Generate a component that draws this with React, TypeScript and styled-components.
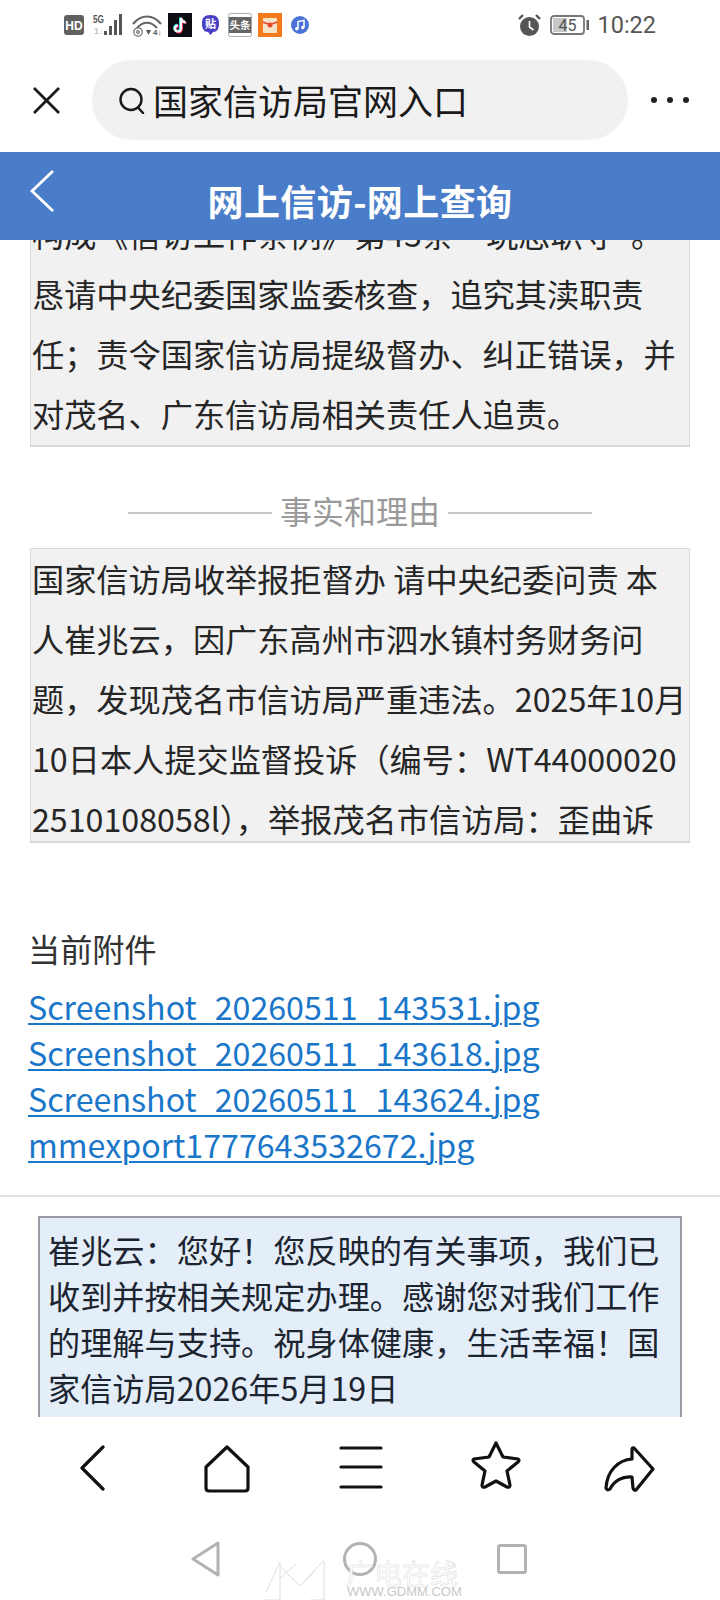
import React from "react";
import styled, { createGlobalStyle } from "styled-components";

const Global = createGlobalStyle`
  html, body { margin: 0; padding: 0; background: #fff; }
  * { box-sizing: border-box; }
  body { font-family: "Noto Sans CJK SC", "Noto Sans", sans-serif; color: #222; }
`;

const Page = styled.div`
  width: 720px;
  height: 1600px;
  display: flex;
  flex-direction: column;
  overflow: hidden;
  background: #fff;
`;

const StatusBar = styled.div`
  height: 48px;
  flex: none;
  display: flex;
  align-items: center;
  justify-content: space-between;
  padding: 1px 64px 0 0;
`;
const StatusGroup = styled.div`
  display: flex;
  align-items: center;
`;
const Slot = styled.span<{ $left: number }>`
  display: flex;
  margin-left: ${(p) => p.$left}px;
`;
const Clock = styled.span`
  margin-left: 8px;
  font: 400 23.5px/28px Roboto, sans-serif;
  color: #555;
`;

const BrowserBar = styled.div`
  height: 104px;
  flex: none;
  display: flex;
  align-items: flex-start;
  padding: 12px 31px 0 33px;
`;
const CloseIcon = styled.svg`
  width: 27px;
  height: 27px;
  margin-top: 27px;
  flex: none;
`;
const SearchPill = styled.div`
  margin-left: 32px;
  width: 537px;
  height: 80px;
  border-radius: 40px;
  background: #f1f1f1;
  display: flex;
  align-items: center;
  padding-left: 26px;
`;
const SearchText = styled.span`
  margin-left: 7px;
  font-size: 35px;
  line-height: 46px;
  color: #1a1a1a;
  white-space: nowrap;
`;
const Dots = styled.div`
  margin-left: 23px;
  margin-top: 37px;
  display: flex;
  gap: 10px;
`;
const Dot = styled.i`
  width: 6px;
  height: 6px;
  border-radius: 50%;
  background: #222;
`;

const SiteHeader = styled.header`
  position: relative;
  z-index: 2;
  height: 88px;
  flex: none;
  background: #4a7dc9;
  display: flex;
  align-items: center;
  justify-content: center;
`;
const HeaderBack = styled.svg`
  position: absolute;
  left: 29px;
  top: 18px;
  width: 26px;
  height: 42px;
`;
const HeaderTitle = styled.h1`
  margin: 8px 0 0;
  font-size: 36px;
  line-height: 50px;
  font-weight: 700;
  color: #fff;
  letter-spacing: 0.4px;
`;

const Scroller = styled.main`
  flex: none;
  height: 1177px;
  overflow: hidden;
`;
const Content = styled.div`
  margin-top: -37px;
`;
const TextBox = styled.div<{ $height: number }>`
  margin: 0 30px;
  width: 660px;
  height: ${(p) => p.$height}px;
  overflow: hidden;
  padding: 0 1px;
  background: #f1f1f1;
  border: 1px solid #d9d9d9;
  border-bottom-width: 2px;
  font-size: 32.2px;
  line-height: 60px;
  color: #262626;
  word-break: break-all;
`;
const BoxText = styled.div<{ $shift: number }>`
  margin-top: ${(p) => p.$shift}px;
`;
const SectionHead = styled.div`
  height: 101px;
  display: flex;
  align-items: center;
  justify-content: center;
  gap: 8px;
  padding-top: 24px;
  font-size: 32px;
  line-height: 46px;
  color: #9a9a9a;
  &::before,
  &::after {
    content: "";
    width: 144px;
    height: 2px;
    background: #c8c8c8;
    margin-top: 6px;
  }
`;
const Attachments = styled.section`
  margin: 82px 0 0 28px;
  font-size: 32.2px;
  line-height: 46px;
`;
const AttachTitle = styled.div`
  margin-bottom: 12px;
  color: #333;
`;
const FileLink = styled.a`
  display: block;
  color: #1976c9;
  text-decoration: underline;
  text-decoration-thickness: 2px;
  text-underline-offset: 3px;
  white-space: nowrap;
`;
const Divider = styled.hr`
  margin: 28px 0 0;
  border: 0;
  height: 2px;
  background: #e2e2e2;
`;
const ReplyBox = styled.div`
  margin: 19px 0 0 38px;
  width: 644px;
  height: 240px;
  padding: 8px 8px;
  background: #e3eef8;
  border: 2px solid #999ca3;
  font-size: 32.2px;
  line-height: 46px;
  color: #1c2430;
`;

const Toolbar = styled.nav`
  height: 103px;
  flex: none;
  display: grid;
  grid-template-columns: repeat(5, 134.5px);
  justify-items: center;
  align-items: start;
  padding: 28px 0 0 25px;
  background: #fff;
`;
const SystemNav = styled.div`
  position: relative;
  flex: 1;
  display: flex;
  justify-content: center;
  align-items: center;
  gap: 120px;
  padding: 0 0 2px 0;
`;
const Watermark = styled.div`
  position: absolute;
  left: 262px;
  top: 38px;
  width: 205px;
  height: 46px;
`;
const WatermarkLogo = styled.svg`
  position: absolute;
  left: 0;
  top: 0;
`;
const WatermarkName = styled.span`
  position: absolute;
  left: 84px;
  top: 0;
  font-size: 28px;
  line-height: 30px;
  color: #fff;
  -webkit-text-stroke: 0.5px #d8d8d8;
  white-space: nowrap;
`;
const WatermarkUrl = styled.span`
  position: absolute;
  left: 85px;
  top: 26px;
  font: 400 13px/16px "Liberation Sans", sans-serif;
  color: #c8c8c8;
  white-space: nowrap;
`;

const ToolIcon = styled.svg.attrs({ fill: "none", stroke: "#111", strokeWidth: 3.2, strokeLinejoin: "round", strokeLinecap: "round" })``;
const StarIcon = styled(ToolIcon)`
  margin-top: -5px;
`;
const NavIcon = styled.svg.attrs({ fill: "none", stroke: "#b2b2b2", strokeWidth: 3, strokeLinejoin: "round" })`
  overflow: visible;
`;

const files = [
  "Screenshot_20260511_143531.jpg",
  "Screenshot_20260511_143618.jpg",
  "Screenshot_20260511_143624.jpg",
  "mmexport1777643532672.jpg",
];

export default function App() {
  return (
    <Page>
      <Global />
      <StatusBar>
        <StatusGroup>
          <Slot $left={64}>
            <svg width="20" height="20" viewBox="0 0 20 20">
              <rect width="20" height="20" rx="3" fill="#606060" />
              <text x="10" y="14.5" textAnchor="middle" fontFamily="Liberation Sans" fontWeight="700" fontSize="12" fill="#fff">HD</text>
            </svg>
          </Slot>
          <Slot $left={9}>
            <svg width="34" height="24" viewBox="0 0 34 24">
              <text x="0" y="9.5" fontFamily="Liberation Sans" fontWeight="700" fontSize="11" fill="#555" textLength="11" lengthAdjust="spacingAndGlyphs">5G</text>
              <text x="1" y="21" fontFamily="Liberation Sans" fontWeight="700" fontSize="9" fill="#c4c4c4">1↓</text>
              <rect x="11" y="18" width="3" height="4" fill="#555" />
              <rect x="16" y="13" width="3" height="9" fill="#555" />
              <rect x="21" y="7" width="3" height="15" fill="#555" />
              <rect x="26" y="1" width="3" height="21" fill="#555" />
            </svg>
          </Slot>
          <Slot $left={5}>
            <svg width="30" height="24" viewBox="0 0 30 24" fill="none">
              <path d="M1 11C9 1 21 1 29 11" stroke="#666" strokeWidth="2.2" />
              <path d="M5 15C11 8 19 8 25 15" stroke="#666" strokeWidth="2.2" />
              <circle cx="6" cy="19" r="1.3" stroke="#777" strokeWidth="1.3" />
              <circle cx="6" cy="19" r="4.2" stroke="#777" strokeWidth="1.3" />
              <path d="M14 17h5l-2.5 5z" fill="#555" />
              <text x="21" y="22" fontFamily="Liberation Sans" fontWeight="700" fontSize="8" fill="#555">4↓</text>
            </svg>
          </Slot>
          <Slot $left={6}>
            <svg width="24" height="24" viewBox="0 0 24 24">
              <rect width="24" height="24" fill="#0c0c12" />
              <path d="M13 5v10.5a3 3 0 1 1-3-3M13 5c.4 2.6 2 4 4.6 4.3" fill="none" stroke="#25e0e8" strokeWidth="2.6" transform="translate(-.7 -.5)" />
              <path d="M13 5v10.5a3 3 0 1 1-3-3M13 5c.4 2.6 2 4 4.6 4.3" fill="none" stroke="#f5305c" strokeWidth="2.6" transform="translate(.7 .6)" />
              <path d="M13 5v10.5a3 3 0 1 1-3-3M13 5c.4 2.6 2 4 4.6 4.3" fill="none" stroke="#fff" strokeWidth="2.2" />
            </svg>
          </Slot>
          <Slot $left={10}>
            <svg width="17" height="22" viewBox="0 0 17 22">
              <path d="M8.5 1C15 1 17 4 17 9.500S15 18 11 18L8.500 21 6 18C2 18 0 15 0 9.500S2 1 8.500 1Z" fill="#4a3fc4" />
              <text x="8.500" y="14" textAnchor="middle" fontFamily="Noto Sans CJK SC" fontWeight="700" fontSize="11" fill="#fff">贴</text>
            </svg>
          </Slot>
          <Slot $left={9}>
            <svg width="24" height="24" viewBox="0 0 24 24">
              <rect x=".5" y=".5" width="23" height="23" rx="2" fill="#fff" stroke="#aaa" />
              <rect x="1" y="4" width="22" height="16" fill="#666" />
              <text x="12" y="16" textAnchor="middle" fontFamily="Noto Sans CJK SC" fontWeight="700" fontSize="10.5" fill="#fff">头条</text>
            </svg>
          </Slot>
          <Slot $left={6}>
            <svg width="24" height="24" viewBox="0 0 24 24">
              <rect width="24" height="24" fill="#f47a1c" />
              <rect x="5" y="5" width="14" height="15" rx="1" fill="#f6e2c8" />
              <path d="M5 9q7 4 14 0" fill="none" stroke="#e5482c" strokeWidth="1.5" />
              <circle cx="12" cy="12" r="2.500" fill="#e5482c" />
            </svg>
          </Slot>
          <Slot $left={9}>
            <svg width="18" height="18" viewBox="0 0 18 18">
              <circle cx="9" cy="9" r="9" fill="#4c74d8" />
              <path d="M7 12.500V5.500l6-1.200v7" fill="none" stroke="#fff" strokeWidth="1.500" />
              <circle cx="5.800" cy="12.700" r="1.700" fill="#fff" />
              <circle cx="11.800" cy="11.500" r="1.700" fill="#fff" />
            </svg>
          </Slot>
        </StatusGroup>
        <StatusGroup>
          <svg width="23" height="24" viewBox="0 0 23 24">
            <circle cx="11.500" cy="13.500" r="9.500" fill="#555" />
            <path d="M11.500 8v6l4 3" fill="none" stroke="#fff" strokeWidth="1.600" />
            <path d="M1 6l4-4M22 6l-4-4" stroke="#555" strokeWidth="2.400" />
          </svg>
          <Slot $left={9}>
            <svg width="39" height="22" viewBox="0 0 39 22">
              <rect x="1" y="2" width="33" height="18" rx="3" fill="#fff" stroke="#777" strokeWidth="1.800" />
              <rect x="3" y="4" width="14" height="14" fill="#c8c8c8" />
              <text x="17.500" y="17" textAnchor="middle" fontFamily="Roboto" fontSize="16" fill="#555">45</text>
              <rect x="36.500" y="6" width="2.500" height="10" fill="#666" />
            </svg>
          </Slot>
          <Clock>10:22</Clock>
        </StatusGroup>
      </StatusBar>

      <BrowserBar>
        <CloseIcon viewBox="0 0 27 27" fill="none" stroke="#1a1a1a" strokeWidth="2.800">
          <path d="M1 1l25 25M26 1L1 26" />
        </CloseIcon>
        <SearchPill>
          <svg width="28" height="27" viewBox="0 0 28 27" fill="none" stroke="#1a1a1a" strokeWidth="2.400">
            <circle cx="13" cy="12.500" r="10.500" />
            <path d="M20 20.500l5 5.500" strokeLinecap="round" />
          </svg>
          <SearchText>国家信访局官网入口</SearchText>
        </SearchPill>
        <Dots>
          <Dot />
          <Dot />
          <Dot />
        </Dots>
      </BrowserBar>

      <SiteHeader>
        <HeaderBack viewBox="0 0 26 42" fill="none" stroke="#fff" strokeWidth="2.800">
          <path d="M24 1L3 21l21 20" />
        </HeaderBack>
        <HeaderTitle>网上信访-网上查询</HeaderTitle>
      </SiteHeader>

      <Scroller>
        <Content>
          <TextBox $height={244}>
            <BoxText $shift={-1}>
              构成《信访工作条例》第43条“玩忽职守”。恳请中央纪委国家监委核查，追究其渎职责任；责令国家信访局提级督办、纠正错误，并对茂名、广东信访局相关责任人追责。
            </BoxText>
          </TextBox>
          <SectionHead>事实和理由</SectionHead>
          <TextBox $height={295}>
            <BoxText $shift={-1}>
              国家信访局收举报拒督办 请中央纪委问责 本人崔兆云，因广东高州市泗水镇村务财务问题，发现茂名市信访局严重违法。2025年10月10日本人提交监督投诉（编号：WT440000202510108058l），举报茂名市信访局：歪曲诉
            </BoxText>
          </TextBox>
          <Attachments>
            <AttachTitle>当前附件</AttachTitle>
            {files.map((f) => (
              <FileLink key={f} href="#">
                {f}
              </FileLink>
            ))}
          </Attachments>
          <Divider />
          <ReplyBox>
            崔兆云：您好！您反映的有关事项，我们已收到并按相关规定办理。感谢您对我们工作的理解与支持。祝身体健康，生活幸福！国家信访局2026年5月19日
          </ReplyBox>
        </Content>
      </Scroller>

      <Toolbar>
        <ToolIcon width="26" height="46" viewBox="0 0 26 46">
          <path d="M24 2L3 23l21 21" />
        </ToolIcon>
        <ToolIcon width="48" height="48" viewBox="0 0 48 48">
          <path d="M24 2L45 22V43Q45 46 42 46H6Q3 46 3 43V22Z" />
        </ToolIcon>
        <ToolIcon width="44" height="44" viewBox="0 0 44 44">
          <path d="M2 3H42M2 22H42M2 42H42" />
        </ToolIcon>
        <StarIcon width="52" height="50" viewBox="0 0 52 50">
          <path d="M26 3L33 17L48 19Q50 20 48 22L37 31L40 45Q40 48 37 47L26 41L15 47Q12 48 12 45L15 31L4 22Q2 20 4 19L19 17Z" />
        </StarIcon>
        <ToolIcon width="52" height="48" viewBox="0 0 52 48">
          <path d="M30 3L49 24L32 45Q30 46 29 43L28 32C18 31 10 36 6 44Q3 46 2 43C3 26 14 15 28 14L28 5Q28 2 30 3Z" />
        </ToolIcon>
      </Toolbar>

      <SystemNav>
        <NavIcon width="30" height="36" viewBox="2 0 30 36">
          <path d="M27 2V34L2 18Z" />
        </NavIcon>
        <NavIcon width="34" height="34" viewBox="0 0 34 34">
          <circle cx="17" cy="17" r="15.500" />
        </NavIcon>
        <NavIcon width="30" height="30" viewBox="0 0 30 30">
          <rect x="1.500" y="1.500" width="27" height="27" rx="2" />
        </NavIcon>
        <Watermark>
          <WatermarkLogo width="72" height="44" viewBox="0 0 72 44" fill="none" stroke="#dedede" strokeWidth="1">
            <path d="M4 34L18 4M18 4V42H2M18 20L34 6M18 8L38 28L62 2M38 28L52 14M62 4V42H48" />
          </WatermarkLogo>
          <WatermarkName>广电在线</WatermarkName>
          <WatermarkUrl>WWW.GDMM.COM</WatermarkUrl>
        </Watermark>
      </SystemNav>
    </Page>
  );
}
